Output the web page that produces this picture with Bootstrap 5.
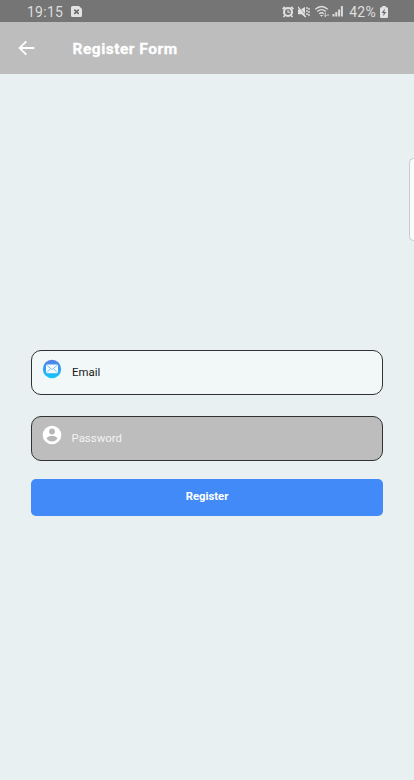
<!DOCTYPE html>
<html lang="en">
<head>
<meta charset="utf-8">
<meta name="viewport" content="width=device-width, initial-scale=1">
<title>Register Form</title>
<link href="https://cdn.jsdelivr.net/npm/bootstrap@5.3.0/dist/css/bootstrap.min.css" rel="stylesheet">
<style>
html,body{height:100%;overflow:hidden}
body{background:#e8f0f2;font-family:Roboto,sans-serif}
svg{display:block;flex:none}
.statusbar{height:22px;background:#757575;color:#dedede;font-size:14px;line-height:22px;padding:1px 26px 0 27px}
.clock{letter-spacing:.25px;width:44px}
.percent{letter-spacing:.25px;margin-left:5px}
.appbar{height:52px;background:#bdbdbd;padding-left:17px}
.appbar h1{font-size:15.5px;font-weight:700;letter-spacing:.5px;line-height:20px;margin-left:35.5px;padding-top:2px;-webkit-text-stroke:.3px #fff}
.form-area{padding:276px 31px 0}
.field{height:45px;border:1px solid #303234;border-radius:10px;background:#f2f8f8;padding-left:10px}
.field input{font-size:11.4px;line-height:16px;color:#17191a;margin:-2px 0 0 10px;padding:0;height:16px}
.field input:focus{box-shadow:none}
.field svg{margin-top:-8px}
.field.secret{background:#bdbdbd;margin-top:21px}
.secret input{letter-spacing:.02px;margin-left:9.500px}
.secret input::placeholder{color:#f3f3f3;opacity:1}
.mail input::placeholder{color:#17191a;opacity:1}
.submit{height:37px;margin-top:18px;background:#428af8;border:0;border-radius:5px;font-size:11.3px;font-weight:700;line-height:16px;padding:0 0 2px;color:#fff}
.edge-panel{position:absolute;right:-4px;top:158px;width:9px;height:83px;border:1px solid #c5cbce;border-radius:5px;background:#fafcfc}
</style>
</head>
<body class="position-relative">
<div class="statusbar d-flex align-items-center">
  <span class="clock">19:15</span>
  <svg width="11" height="11" viewBox="0 0 11 11"><path d="M1.5 0H8l3 3v6.500Q11 11 9.500 11h-8Q0 11 0 9.500v-8Q0 0 1.500 0Z" fill="#e3e3e3"/><path d="m3.300 3.600 4.400 4.300m0-4.300L3.300 7.900" stroke="#686868" stroke-width="1.500"/></svg>
  <div class="d-flex align-items-center ms-auto">
    <svg width="12" height="12" viewBox="0 0 12 12" fill="none" stroke="#e1e1e1"><path d="M.6 3 3 1M9 1l2.400 2M2.800 9.500 1.500 11M9.200 9.500l1.300 1.500" stroke-width="1.700"/><circle cx="6" cy="6" r="4" stroke-width="2.100"/><path d="M6 3.800v2.500h2" stroke-width="1.100"/></svg>
    <svg class="ms-1" width="12" height="12" viewBox="0 0 12 12"><path d="M0 3.500h2.500L7 1v10L3.500 8.300H0Z" fill="#e1e1e1"/><path d="m.5 0 7.500 10" stroke="#757575" stroke-width=".7"/><path d="m0 .8 7.700 10.400" stroke="#e1e1e1" stroke-width="1.300"/><path d="M9 1v2M9 4v2M9 7v2M11 2v2M11 5v2M11 8v2" fill="none" stroke="#dedede" stroke-width="1.400"/></svg>
    <svg class="ms-1" width="17" height="13" viewBox="0 0 16 13" fill="none" stroke="#dedede" stroke-width="1.300"><path d="M.8 4.200Q7-1.300 13.200 4.200M2.700 6.600Q7 2.600 11.300 6.600M4.700 8.800Q7 6.600 9.300 8.800"/><path d="m5.400 10 1.600 1.700L8.600 10Z" fill="#dedede" stroke="none"/><path d="M10.800 7.500v4m-1.300-1.200 1.300 1.400 1.300-1.400M13.500 9v2" stroke-width=".9"/></svg>
    <svg width="13" height="11" viewBox="0 0 13 11" fill="#dcdcdc"><path d="M1.500 8h2v2.500h-2ZM4.300 6h2v4.500h-2ZM7.100 3.500h2v7h-2ZM9.900 0h2v10.500h-2Z"/></svg>
    <span class="percent">42%</span>
    <svg width="8" height="12" viewBox="0 0 8 12" class="ms-1"><path d="M2.300 0h3.400v1.200h1.100Q8 1.200 8 2.500v8Q8 12 6.800 12H1.200Q0 12 0 10.500v-8Q0 1.200 1.200 1.200h1.100Z" fill="#e3e3e3"/><path d="M4.900 2.500 1.600 7h2.100l-.6 3.300L6.400 6H4.300Z" fill="#707070"/></svg>
  </div>
</div>
<header class="appbar d-flex align-items-center text-white">
  <svg width="20" height="18" viewBox="0 0 20 18" fill="none" stroke="#fff" stroke-width="1.800"><path d="M17.400 9H2.800M9.300 2.300 2.600 9l6.700 6.700"/></svg>
  <h1 class="mb-0">Register Form</h1>
</header>
<form class="form-area">
  <label class="field mail d-flex align-items-center">
    <svg width="20" height="20" viewBox="0 0 20 20"><defs><linearGradient id="sky" x2="0" y2="1"><stop stop-color="#567de5"/><stop offset="1" stop-color="#10c8fa"/></linearGradient></defs><circle cx="10" cy="10" r="9.200" fill="url(#sky)"/><rect x="4" y="5.400" width="12" height="8.800" rx="1.200" fill="#f4fbff"/><path d="m4.800 6.300 5.200 4.300 5.200-4.300M4.800 13.600l3.600-4M15.200 13.600l-3.600-4" fill="none" stroke="#55aee9" stroke-width=".7"/></svg>
    <input class="form-control border-0 bg-transparent" type="email" placeholder="Email">
  </label>
  <label class="field secret d-flex align-items-center">
    <svg width="20" height="20" viewBox="0 0 20 20"><circle cx="10" cy="10" r="9.300" fill="#fff"/><circle cx="10" cy="6.500" r="2.900" fill="#b7b7b7"/><path d="M4.400 13.500C5.500 11.700 8 11.100 10 11.100s4.500.6 5.600 2.400A6.700 6.700 0 0 1 10 16.400a6.700 6.700 0 0 1-5.600-2.900Z" fill="#b7b7b7"/></svg>
    <input class="form-control border-0 bg-transparent" type="password" placeholder="Password">
  </label>
  <button class="submit btn w-100" type="button">Register</button>
</form>
<div class="edge-panel"></div>
<script src="https://cdn.jsdelivr.net/npm/bootstrap@5.3.0/dist/js/bootstrap.bundle.min.js"></script>
</body>
</html>
